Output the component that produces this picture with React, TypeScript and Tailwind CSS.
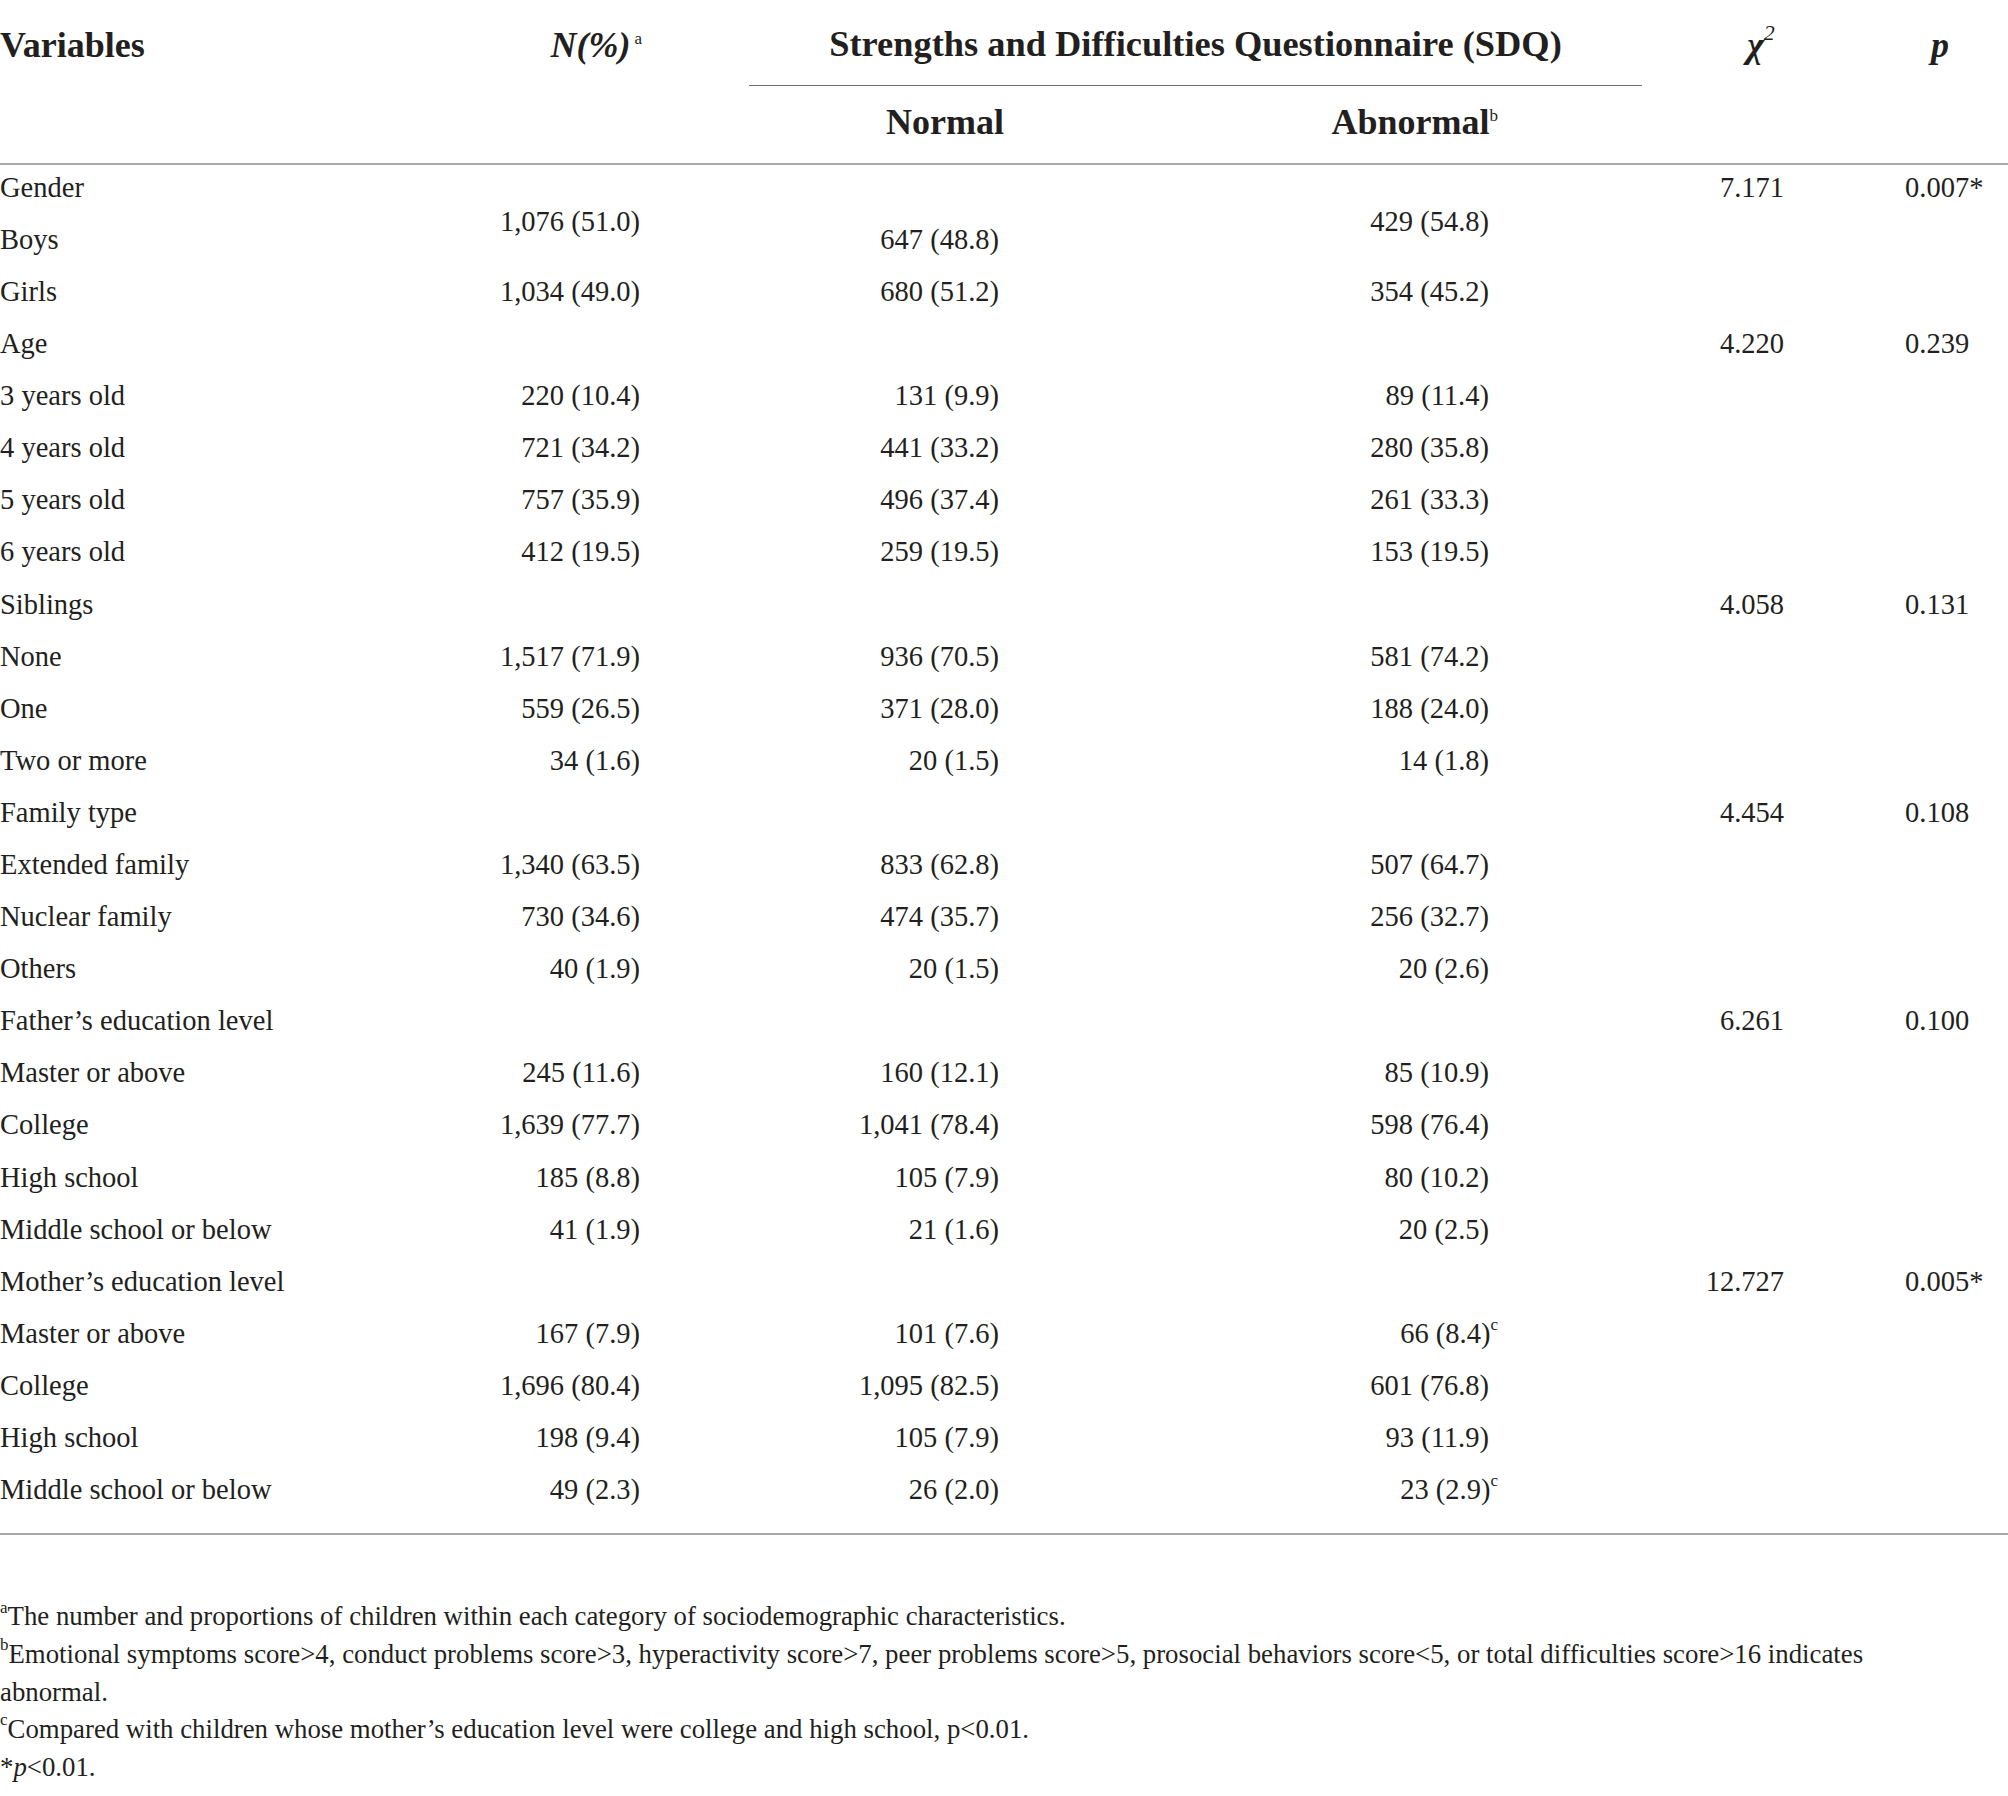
type Row = {
  label: string
  n?: string
  normal?: string
  abnormal?: string
  sup?: string
  chi?: string
  p?: string
  lift?: boolean
}

const rows: Row[] = [
  { label: 'Gender', chi: '7.171', p: '0.007*' },
  { label: 'Boys', n: '1,076 (51.0)', normal: '647 (48.8)', abnormal: '429 (54.8)', lift: true },
  { label: 'Girls', n: '1,034 (49.0)', normal: '680 (51.2)', abnormal: '354 (45.2)' },
  { label: 'Age', chi: '4.220', p: '0.239' },
  { label: '3 years old', n: '220 (10.4)', normal: '131 (9.9)', abnormal: '89 (11.4)' },
  { label: '4 years old', n: '721 (34.2)', normal: '441 (33.2)', abnormal: '280 (35.8)' },
  { label: '5 years old', n: '757 (35.9)', normal: '496 (37.4)', abnormal: '261 (33.3)' },
  { label: '6 years old', n: '412 (19.5)', normal: '259 (19.5)', abnormal: '153 (19.5)' },
  { label: 'Siblings', chi: '4.058', p: '0.131' },
  { label: 'None', n: '1,517 (71.9)', normal: '936 (70.5)', abnormal: '581 (74.2)' },
  { label: 'One', n: '559 (26.5)', normal: '371 (28.0)', abnormal: '188 (24.0)' },
  { label: 'Two or more', n: '34 (1.6)', normal: '20 (1.5)', abnormal: '14 (1.8)' },
  { label: 'Family type', chi: '4.454', p: '0.108' },
  { label: 'Extended family', n: '1,340 (63.5)', normal: '833 (62.8)', abnormal: '507 (64.7)' },
  { label: 'Nuclear family', n: '730 (34.6)', normal: '474 (35.7)', abnormal: '256 (32.7)' },
  { label: 'Others', n: '40 (1.9)', normal: '20 (1.5)', abnormal: '20 (2.6)' },
  { label: 'Father\u2019s education level', chi: '6.261', p: '0.100' },
  { label: 'Master or above', n: '245 (11.6)', normal: '160 (12.1)', abnormal: '85 (10.9)' },
  { label: 'College', n: '1,639 (77.7)', normal: '1,041 (78.4)', abnormal: '598 (76.4)' },
  { label: 'High school', n: '185 (8.8)', normal: '105 (7.9)', abnormal: '80 (10.2)' },
  { label: 'Middle school or below', n: '41 (1.9)', normal: '21 (1.6)', abnormal: '20 (2.5)' },
  { label: 'Mother\u2019s education level', chi: '12.727', p: '0.005*' },
  { label: 'Master or above', n: '167 (7.9)', normal: '101 (7.6)', abnormal: '66 (8.4)', sup: 'c' },
  { label: 'College', n: '1,696 (80.4)', normal: '1,095 (82.5)', abnormal: '601 (76.8)' },
  { label: 'High school', n: '198 (9.4)', normal: '105 (7.9)', abnormal: '93 (11.9)' },
  { label: 'Middle school or below', n: '49 (2.3)', normal: '26 (2.0)', abnormal: '23 (2.9)', sup: 'c' },
]

function Sup({ children }: { children: string }) {
  return <sup className="text-[17px] font-normal not-italic -top-[0.75em]">{children}</sup>
}

function DataRow({ row }: { row: Row }) {
  // the Boys counts sit half a row higher in the source table
  const lift = row.lift ? 'mb-[36px]' : ''
  return (
    <div className="grid h-[52.1px] grid-cols-[420px_220px_359px_490px_295px_1fr] grid-rows-[minmax(0,1fr)] items-center pb-[6px]">
      <div>{row.label}</div>
      <div className={`text-right ${lift}`}>{row.n}</div>
      <div className="text-right">{row.normal}</div>
      <div className={`text-right ${lift}`}>
        {row.abnormal}
        {row.sup && (
          <span className="-mr-[9px]">
            <Sup>{row.sup}</Sup>
          </span>
        )}
      </div>
      <div className="text-right">{row.chi}</div>
      <div className="pl-[121px]">{row.p}</div>
    </div>
  )
}

export default function App() {
  return (
    <main className="min-h-screen w-[2008px] bg-white font-['Liberation_Serif',serif] text-[28.5px] leading-none text-[#231f20]">
      {/* header */}
      <div className="border-b-2 border-[#a8a8a8] text-[36px] font-bold">
        <div className="flex h-[86px]">
          <div className="flex w-[420px] shrink-0 items-center pt-[4px]">Variables</div>
          <div className="flex w-[220px] shrink-0 items-center justify-end pt-[4px] italic">
            N(%)<span className="-mr-[2px] pl-[4px]"><Sup>a</Sup></span>
          </div>
          <div className="w-[109px] shrink-0" />
          <div className="flex w-[893px] shrink-0 items-center justify-center border-b border-[#6f6f6f] pt-[4px] text-[36.4px]">
            Strengths and Difficulties Questionnaire (SDQ)
          </div>
          <div className="flex w-[224px] shrink-0 items-center justify-center pl-[14px] pt-[4px] italic">
            χ<sup className="-top-[0.55em] text-[22px] font-normal">2</sup>
          </div>
          <div className="flex w-[142px] shrink-0 items-center justify-center pl-[6px] pt-[4px] italic">p</div>
        </div>
        <div className="grid h-[77px] grid-cols-[420px_220px_364px_485px_1fr] items-center pb-[6px]">
          <div />
          <div />
          <div className="text-right">Normal</div>
          <div className="text-right">
            Abnormal
            <span className="-mr-[9px]">
              <Sup>b</Sup>
            </span>
          </div>
          <div />
        </div>
      </div>

      {/* body */}
      <div className="border-b-2 border-[#a8a8a8] pb-[14px]">
        {rows.map((r, i) => (
          <DataRow key={i} row={r} />
        ))}
      </div>

      {/* footnotes */}
      <div className="w-[1940px] pt-[63px] text-[26.8px] leading-[37.6px]">
        <p>
          <Sup>a</Sup>The number and proportions of children within each category of sociodemographic characteristics.
        </p>
        <p>
          <Sup>b</Sup>Emotional symptoms score&gt;4, conduct problems score&gt;3, hyperactivity score&gt;7, peer problems
          score&gt;5, prosocial behaviors score&lt;5, or total difficulties score&gt;16 indicates abnormal.
        </p>
        <p>
          <Sup>c</Sup>Compared with children whose mother’s education level were college and high school, p&lt;0.01.
        </p>
        <p>
          *<span className="italic">p</span>&lt;0.01.
        </p>
      </div>
    </main>
  )
}
